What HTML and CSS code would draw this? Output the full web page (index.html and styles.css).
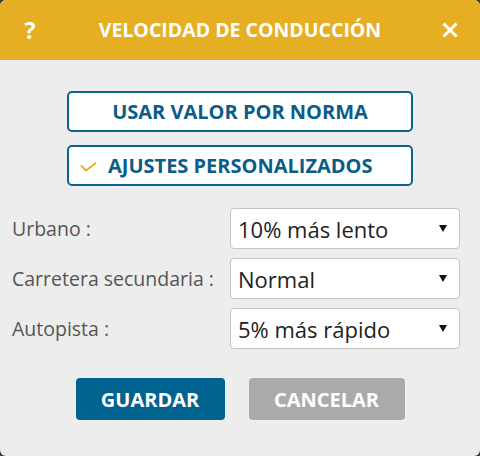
FILE: index.html
```html
<!DOCTYPE html>
<html lang="es">
<head>
<meta charset="utf-8">
<link rel="stylesheet" href="styles.css">
</head>
<body>
<div class="dialog">
  <div class="header">
    <span class="help">?</span>
    <span class="title">VELOCIDAD DE CONDUCCIÓN</span>
    <span class="close">
      <svg width="16" height="16" viewBox="0 0 16 16"><path d="M1.5 1.5 L14.5 14.5 M14.5 1.5 L1.5 14.5" stroke="#fff" stroke-width="3"/></svg>
    </span>
  </div>
  <div class="body">
    <div class="modes">
      <button class="mode">USAR VALOR POR NORMA</button>
      <button class="mode selected">
        <svg class="check" width="17" height="10" viewBox="0 0 17 10"><path d="M1 3.5 L6 8.5 L16 0.8" fill="none" stroke="#e5ae25" stroke-width="1.8"/></svg>
        AJUSTES PERSONALIZADOS
      </button>
    </div>
    <div class="rows">
      <div class="row">
        <span class="label">Urbano :</span>
        <div class="select"><span>10% más lento</span><svg class="arrow" width="8" height="7" viewBox="0 0 8 7"><path d="M0 0 H8 L4 7 Z" fill="#111"/></svg></div>
      </div>
      <div class="row">
        <span class="label">Carretera secundaria :</span>
        <div class="select"><span>Normal</span><svg class="arrow" width="8" height="7" viewBox="0 0 8 7"><path d="M0 0 H8 L4 7 Z" fill="#111"/></svg></div>
      </div>
      <div class="row">
        <span class="label">Autopista :</span>
        <div class="select"><span>5% más rápido</span><svg class="arrow" width="8" height="7" viewBox="0 0 8 7"><path d="M0 0 H8 L4 7 Z" fill="#111"/></svg></div>
      </div>
    </div>
    <div class="actions">
      <button class="btn save">GUARDAR</button>
      <button class="btn cancel">CANCELAR</button>
    </div>
  </div>
</div>
</body>
</html>
```
FILE: styles.css
```css
* { box-sizing: border-box; }
html, body { margin: 0; padding: 0; background: #3a3a3a; }
body { font-family: "Open Sans", "Liberation Sans", sans-serif; }
.dialog {
  width: 480px;
  height: 456px;
  background: #ededed;
  border-radius: 6px;
  overflow: hidden;
}
.header {
  height: 60px;
  background: #e6af23;
  display: flex;
  align-items: center;
  color: #fff;
  font-weight: 700;
}
.help {
  width: 60px;
  text-align: center;
  font-size: 23px;
  line-height: 1;
}
.title {
  flex: 1;
  text-align: center;
  font-size: 19.5px;
  line-height: 1;
}
.close {
  width: 60px;
  display: flex;
  justify-content: center;
  align-items: center;
}
.close svg { display: block; margin-left: 0; }
.body { padding: 31px 0 0; }
.modes {
  display: flex;
  flex-direction: column;
  align-items: center;
  gap: 13px;
}
.mode {
  width: 346px;
  height: 41px;
  background: #fff;
  border: 2px solid #0a6391;
  border-radius: 5px;
  color: #0b5d88;
  font-family: inherit;
  font-weight: 700;
  font-size: 20px;
  display: flex;
  align-items: center;
  justify-content: center;
  gap: 11px;
  padding: 0;
}
.mode.selected { justify-content: flex-start; padding-left: 11px; }
.check { display: block; margin-top: 3px; }
.rows {
  margin-top: 22px;
  display: flex;
  flex-direction: column;
  gap: 9px;
  padding: 0 20px 0 12px;
}
.row {
  display: flex;
  align-items: center;
  justify-content: space-between;
}
.label {
  font-size: 19.5px;
  color: #555;
}
.select {
  width: 230px;
  height: 41px;
  background: #fff;
  border: 1px solid #c4c4c4;
  border-radius: 4px;
  display: flex;
  align-items: center;
  justify-content: space-between;
  padding: 0 12px 0 7px;
  font-size: 22px;
  color: #222;
}
.arrow { display: block; }
.actions {
  margin-top: 29px;
  display: flex;
  justify-content: center;
  gap: 24px;
}
.btn {
  height: 42px;
  border: none;
  border-radius: 4px;
  color: #fff;
  font-family: inherit;
  font-weight: 700;
  font-size: 20px;
  padding: 0;
}
.save { width: 149px; background: #00628f; }
.cancel { width: 156px; background: #aaaaaa; }
```
